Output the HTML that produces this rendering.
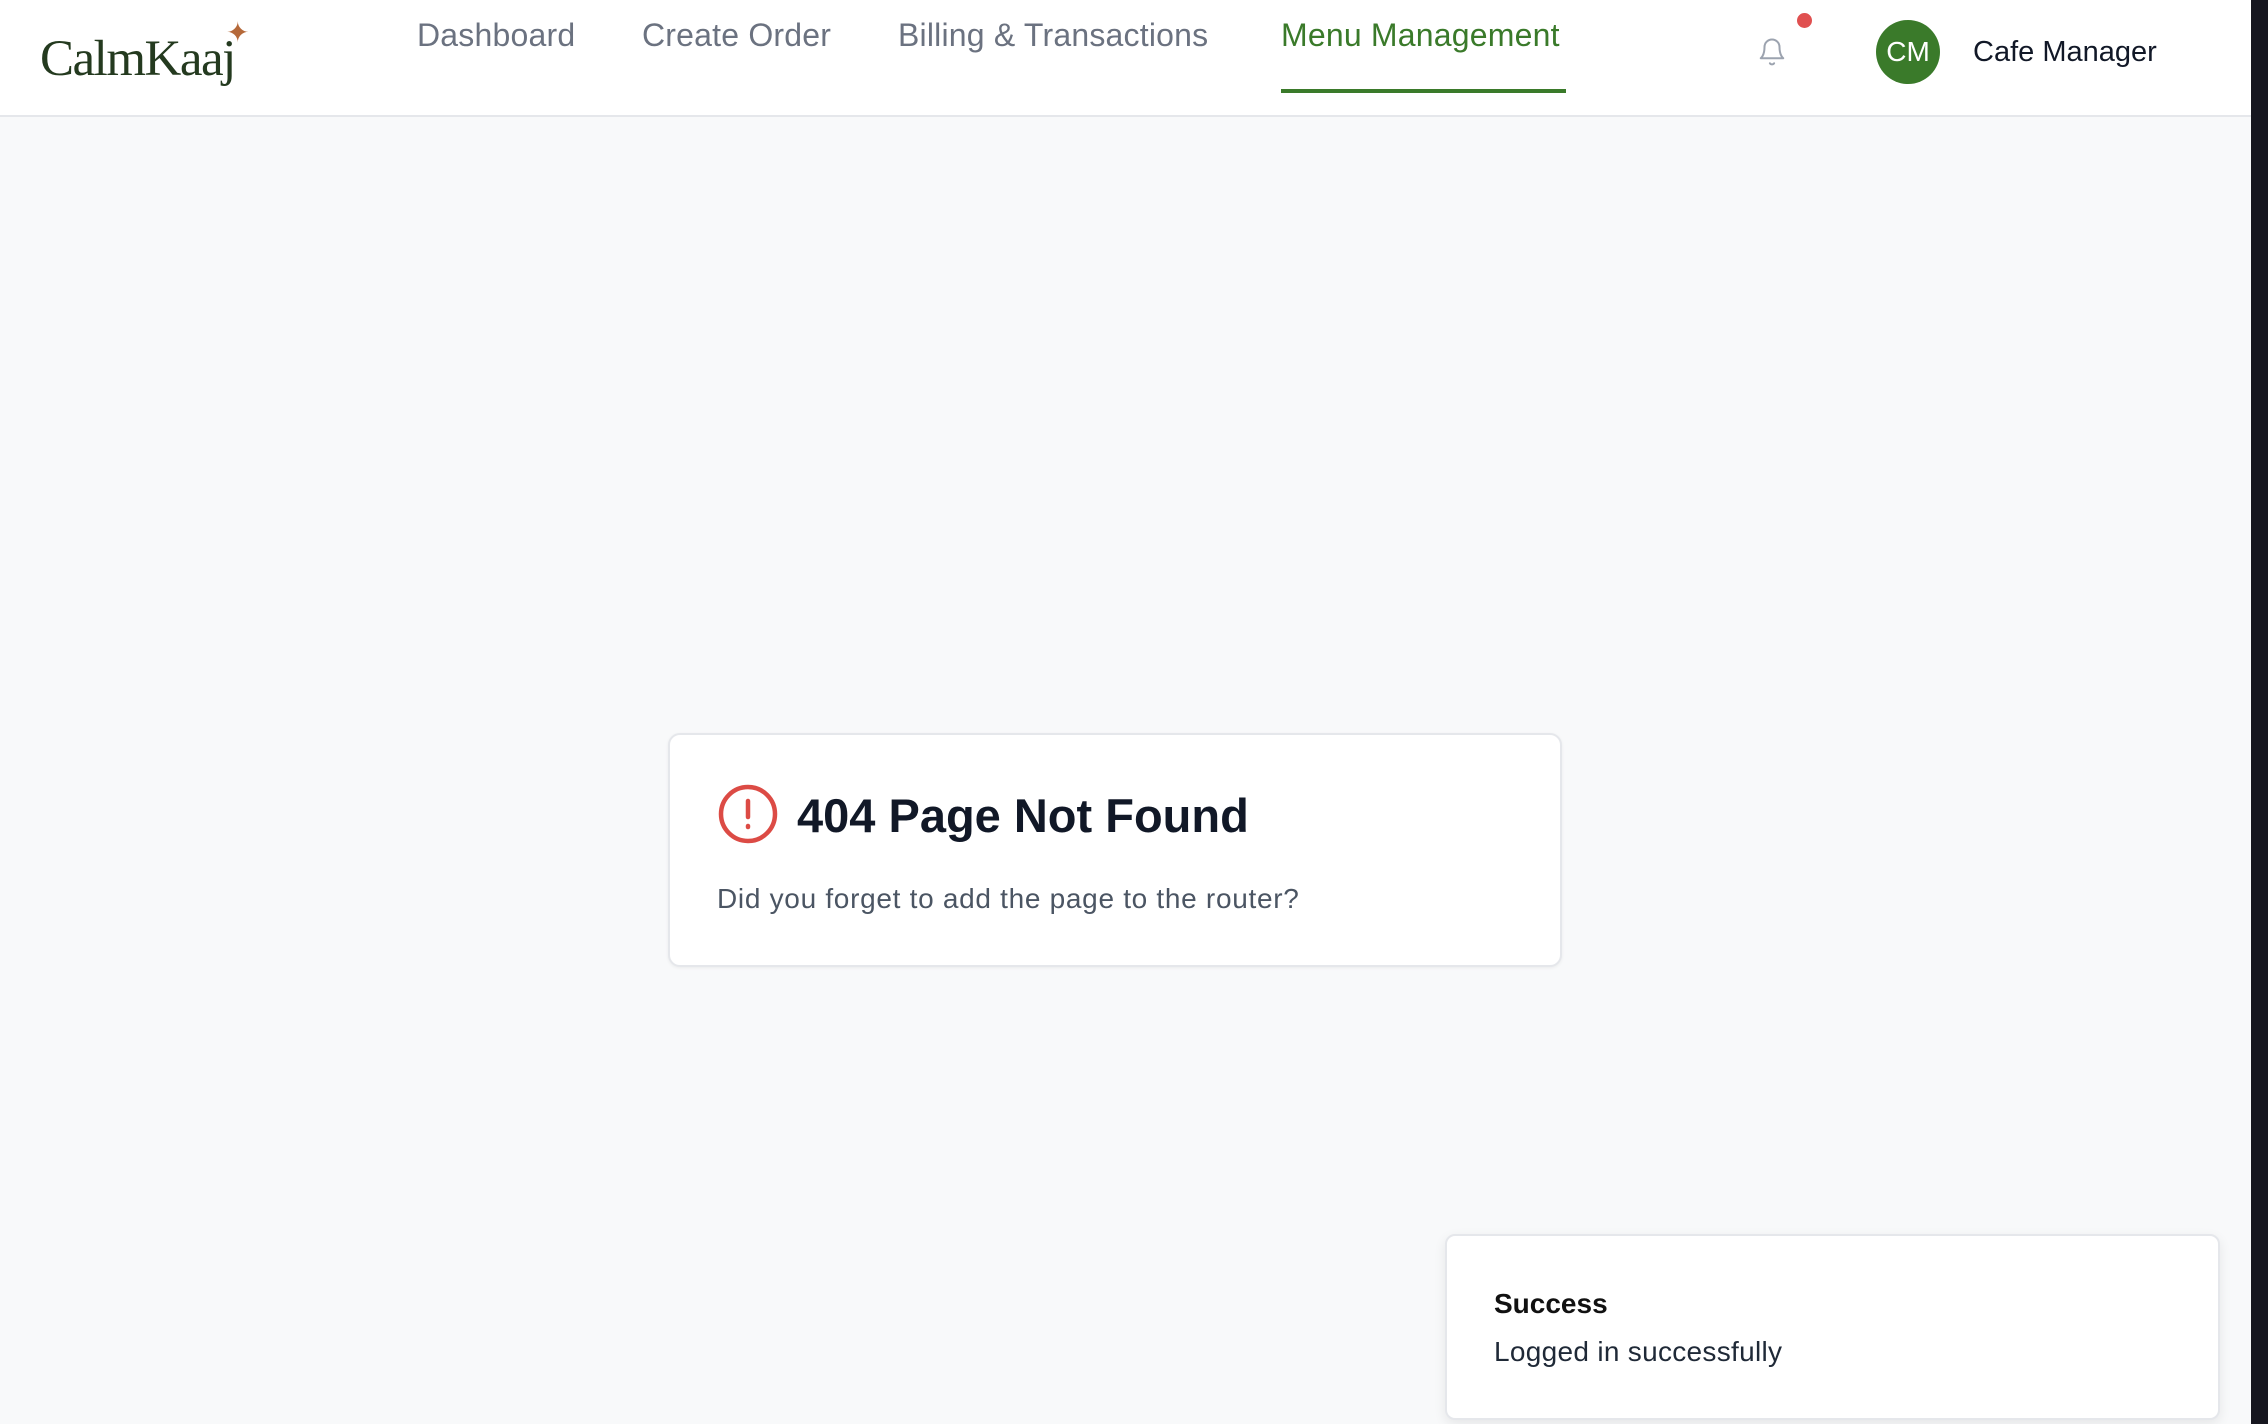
<!DOCTYPE html>
<html><head><meta charset="utf-8"><style>
*{margin:0;padding:0;box-sizing:border-box}
body{width:2268px;height:1424px;background:#f8f9fa;font-family:"Liberation Sans",sans-serif;position:relative;overflow:hidden}
.hdr{position:absolute;left:0;top:0;width:2251px;height:117px;background:#fff;border-bottom:2px solid #e5e7eb}
.rbar{position:absolute;right:0;top:0;width:17px;height:1424px;background:#16161f}
.logo{position:absolute;left:40px;top:30px;font-family:"Liberation Serif",serif;font-size:51px;color:#243a1f;letter-spacing:-1.5px}
.star{position:absolute;left:226px;top:16px;color:#b5693a;font-size:28px}
.nav{position:absolute;top:17px;font-size:32px;color:#6b7280;letter-spacing:0.2px}
.act{color:#3a7a2a}
.ul{position:absolute;left:1281px;top:89px;width:285px;height:4px;background:#3a7a2a}
.dot{position:absolute;left:1797px;top:13px;width:15px;height:15px;border-radius:50%;background:#e05050}
.av{position:absolute;left:1876px;top:20px;width:64px;height:64px;border-radius:50%;background:#3a7a2a;color:#fff;font-size:28px;line-height:64px;text-align:center}
.name{position:absolute;left:1973px;top:36px;font-size:29px;color:#111827}
.card{position:absolute;left:668px;top:733px;width:894px;height:234px;background:#fff;border:2px solid #e5e7eb;border-radius:12px;box-shadow:0 1px 3px rgba(0,0,0,.06)}
.title{position:absolute;left:797px;top:788px;font-size:47px;font-weight:bold;color:#111827}
.sub{position:absolute;left:717px;top:883px;font-size:28px;letter-spacing:0.7px;color:#4b5563}
.toast{position:absolute;left:1445px;top:1234px;width:775px;height:186px;background:#fff;border:2px solid #e5e7eb;border-radius:10px;box-shadow:0 4px 12px rgba(0,0,0,.08)}
.t1{position:absolute;left:1494px;top:1288px;font-size:28px;font-weight:bold;color:#111}
.t2{position:absolute;left:1494px;top:1336px;font-size:28px;letter-spacing:0.3px;color:#1f2937}
</style></head><body>
<div class="hdr"></div>
<div class="rbar"></div>
<div class="logo">CalmKaaj</div>
<div class="star">✦</div>
<div class="nav" style="left:417px">Dashboard</div>
<div class="nav" style="left:642px">Create Order</div>
<div class="nav" style="left:898px">Billing &amp; Transactions</div>
<div class="nav act" style="left:1281px">Menu Management</div>
<div class="ul"></div>
<svg style="position:absolute;left:1757px;top:35px" width="30" height="34" viewBox="0 0 24 26" fill="none" stroke="#9ca3af" stroke-width="1.6" stroke-linecap="round" stroke-linejoin="round"><path d="M18 9a6 6 0 0 0-12 0c0 7-3 9-3 9h18s-3-2-3-9"/><path d="M13.7 22a2 2 0 0 1-3.4 0"/></svg>
<div class="dot"></div>
<div class="av">CM</div>
<div class="name">Cafe Manager</div>
<div class="card"></div>
<svg style="position:absolute;left:718px;top:784px" width="60" height="60" viewBox="0 0 60 60" fill="none" stroke="#dc4b45" stroke-width="4.5" stroke-linecap="round"><circle cx="30" cy="30" r="27"/><path d="M30 17v16"/><path d="M30 42v1"/></svg>
<div class="title">404 Page Not Found</div>
<div class="sub">Did you forget to add the page to the router?</div>
<div class="toast"></div>
<div class="t1">Success</div>
<div class="t2">Logged in successfully</div>
</body></html>
